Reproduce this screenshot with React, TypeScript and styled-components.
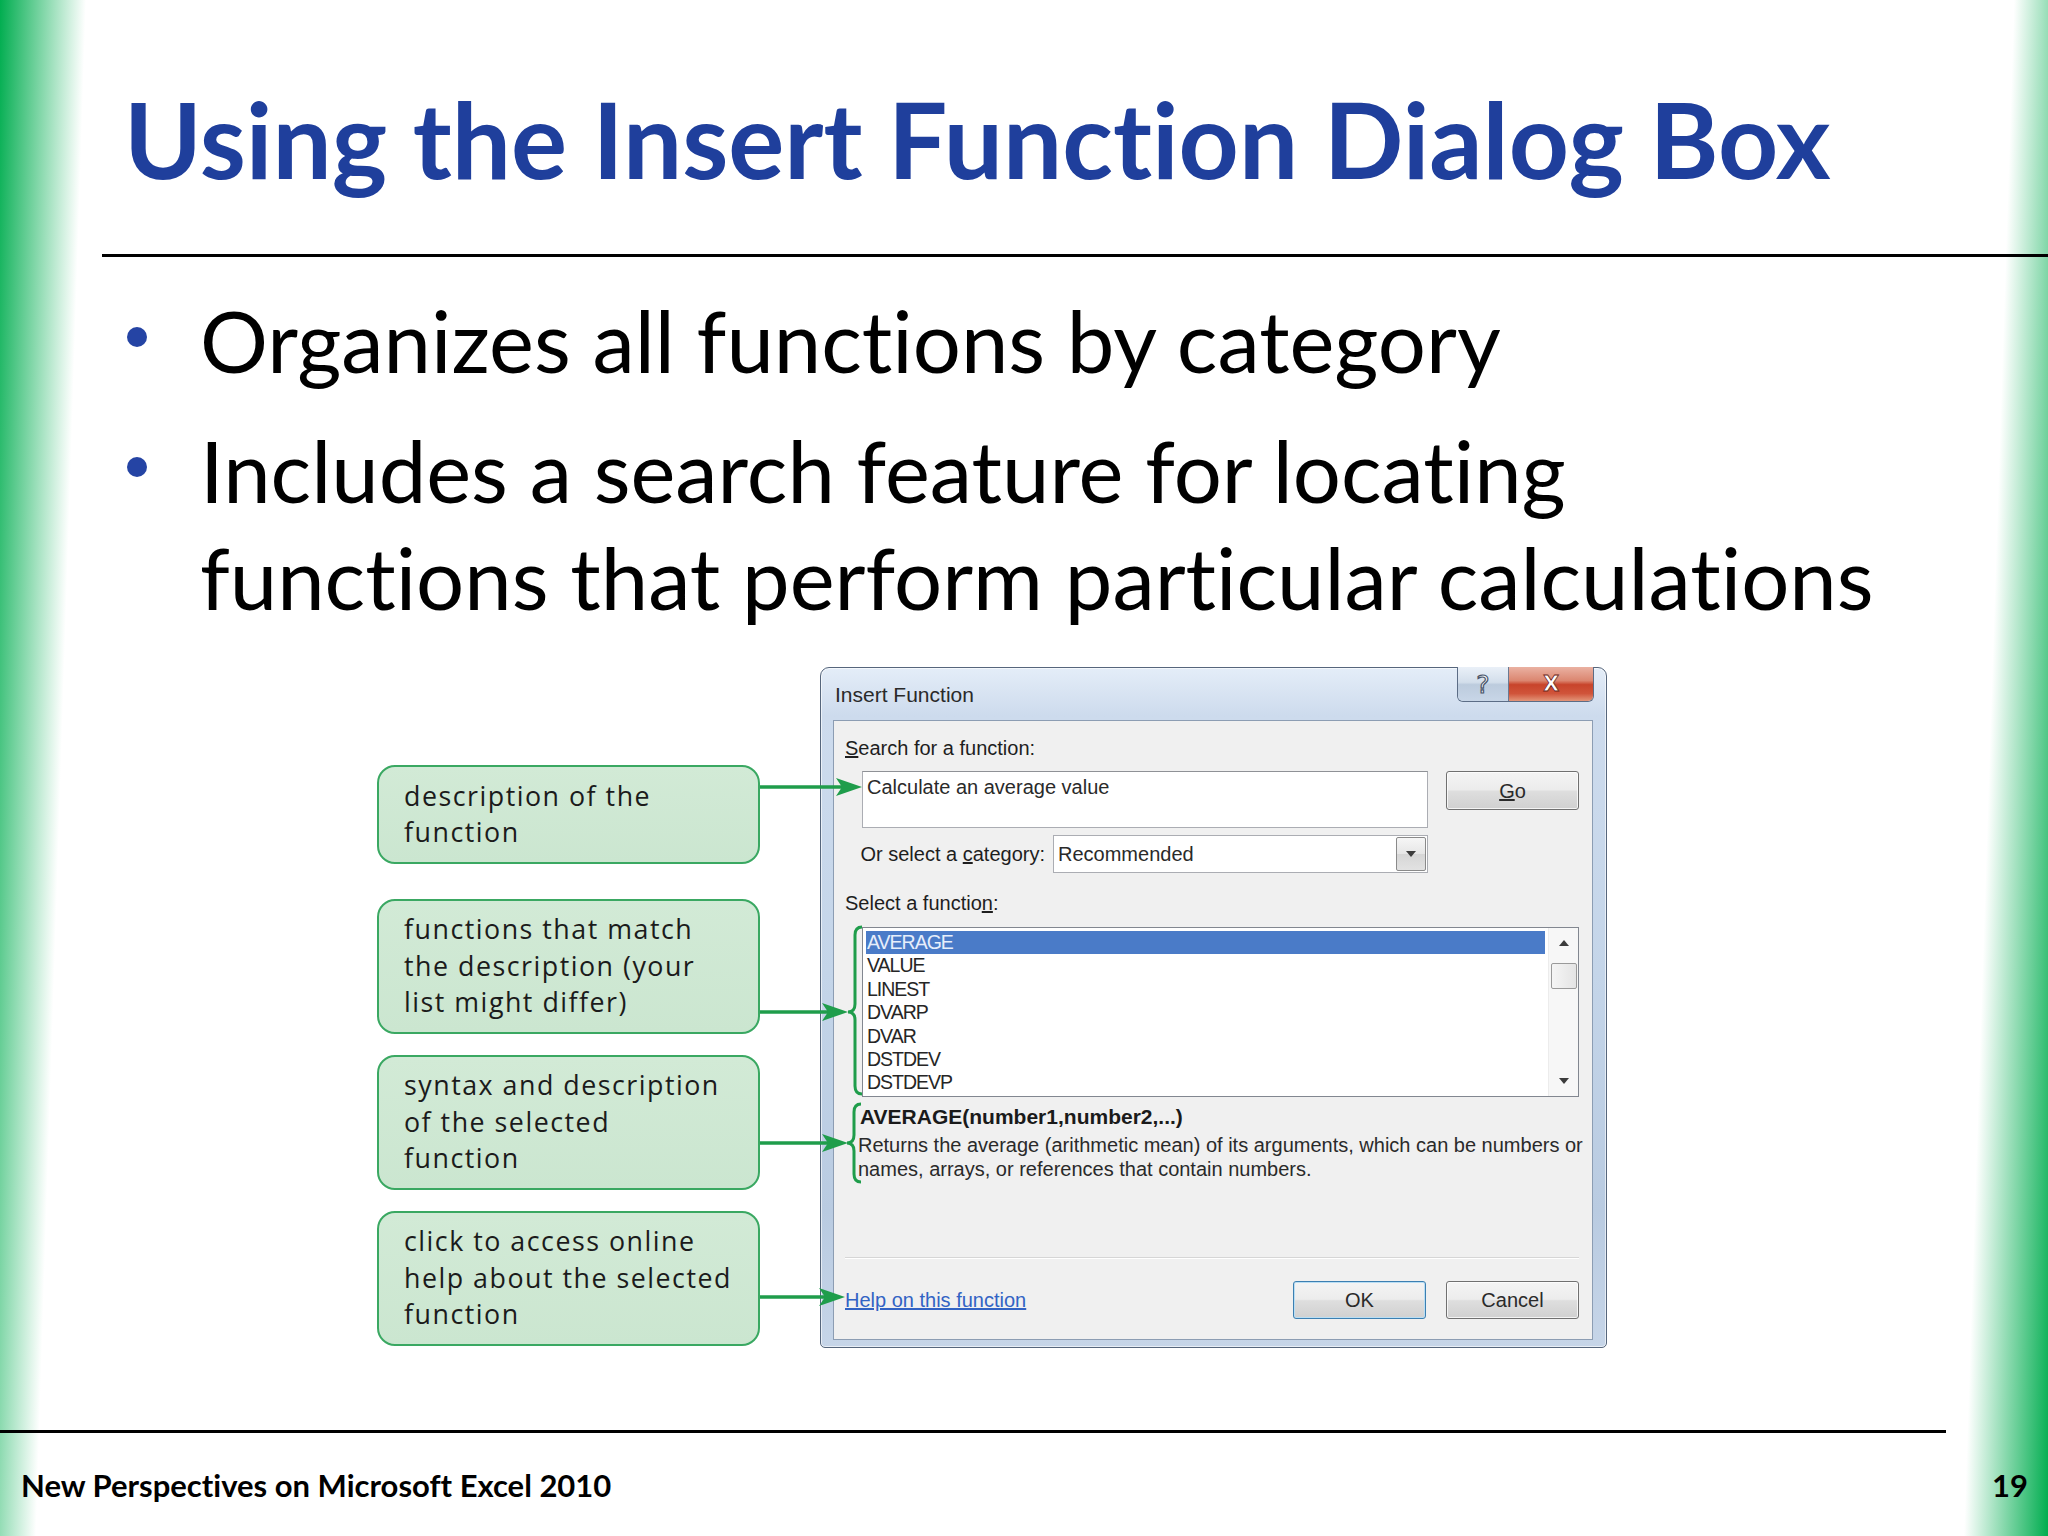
import React from 'react';
import styled, { createGlobalStyle, css } from 'styled-components';

const GlobalStyle = createGlobalStyle`
  html, body { margin: 0; padding: 0; background: #ffffff; }
  body { width: 2048px; height: 1536px; overflow: hidden; }
  *, *::before, *::after { box-sizing: border-box; }
`;

const noLigatures = css`
  font-variant-ligatures: none;
  font-feature-settings: 'liga' 0, 'clig' 0, 'dlig' 0;
`;

const GREEN = '#00ad4f';
const ARROW = '#1f9d4b';

const Slide = styled.div`
  width: 2048px;
  height: 1536px;
  position: relative;
  overflow: hidden;
  display: flex;
  flex-direction: column;
  background: linear-gradient(
    91.87deg,
    ${GREEN} 0px,
    #ffffff 86px,
    #ffffff 2013px,
    ${GREEN} 2097px
  );
  font-family: Lato, 'Open Sans', sans-serif;
`;

const Header = styled.header`
  height: 257px;
  margin-left: 102px;
  padding: 75px 0 0 22px;
  border-bottom: 3px solid #000000;
`;

const Title = styled.h1`
  margin: 0;
  font: 700 105px/1.2 Lato, sans-serif;
  ${noLigatures}
  color: #1f3f9c;
  white-space: nowrap;
`;

const BulletList = styled.ul`
  list-style: none;
  margin: 30px 0 0 0;
  padding: 0 0 0 127px;
  display: flex;
  flex-direction: column;
  gap: 23px;
`;

const Bullet = styled.li`
  display: flex;
  align-items: flex-start;
`;

const Dot = styled.span`
  flex: none;
  width: 20px;
  height: 20px;
  border-radius: 50%;
  background: #2544a4;
  margin: 40px 53px 0 0;
`;

const BulletText = styled.span`
  display: flex;
  flex-direction: column;
  font: 400 85px/107px Lato, sans-serif;
  ${noLigatures}
  color: #000000;
  white-space: nowrap;
`;

const Figure = styled.div`
  position: relative;
  display: flex;
  gap: 60px;
  margin: 36px 0 0 377px;
  height: 681px;
`;

const Callouts = styled.div`
  width: 383px;
  padding-top: 98px;
  display: flex;
  flex-direction: column;
`;

const Callout = styled.div<{ $gap: number }>`
  margin-top: ${(p) => p.$gap}px;
  border: 2px solid #3aa862;
  border-radius: 18px;
  background: linear-gradient(180deg, #d2ead6 0%, #cbe6d0 100%);
  padding: 10.5px 6px 11px 25px;
  font: 400 26.8px/36.5px 'Open Sans', sans-serif;
  ${noLigatures}
  letter-spacing: 1.5px;
  color: #1b1b1b;
  white-space: nowrap;
  display: flex;
  flex-direction: column;
`;

const Dialog = styled.div`
  width: 787px;
  height: 681px;
  display: flex;
  flex-direction: column;
  border: 1px solid #56667c;
  border-radius: 9px 9px 5px 5px;
  background: linear-gradient(
    180deg,
    #e4edf8 0%,
    #cddbed 7%,
    #c4d5e9 45%,
    #b9cbe1 80%,
    #c6d5e8 100%
  );
  box-shadow: inset 0 0 0 1px rgba(255, 255, 255, 0.6);
  font-family: 'Liberation Sans', Arial, sans-serif;
  color: #1e1e1e;
`;

const TitleBar = styled.div`
  height: 52px;
  flex: none;
  display: flex;
  align-items: flex-start;
  justify-content: space-between;
  padding: 0 12px 0 14px;
`;

const DialogTitle = styled.span`
  margin-top: 15px;
  font-size: 21px;
  line-height: 24px;
  color: #2a2a2a;
`;

const CaptionGroup = styled.div`
  display: flex;
  height: 35px;
  margin-top: -1px;
  border: 1px solid #5c6d86;
  border-top: none;
  border-radius: 0 0 6px 6px;
  overflow: hidden;
`;

const CaptionButton = styled.div<{ $close?: boolean }>`
  width: ${(p) => (p.$close ? 85 : 50)}px;
  display: flex;
  align-items: center;
  justify-content: center;
  font-family: 'DejaVu Sans', sans-serif;
  font-weight: ${(p) => (p.$close ? 700 : 400)};
  font-size: ${(p) => (p.$close ? 21 : 25)}px;
  color: ${(p) => (p.$close ? '#ffffff' : '#f2f5f9')};
  -webkit-text-stroke: ${(p) => (p.$close ? '0.8px #6b2418' : '1.2px #4a5568')};
  background: ${(p) =>
    p.$close
      ? 'linear-gradient(180deg, #eab1a2 0%, #db8670 40%, #c8442b 52%, #d0543a 78%, #e39579 100%)'
      : 'linear-gradient(180deg, #eaf0f8 0%, #d3deeb 45%, #bccbdd 52%, #c8d6e7 100%)'};
  & + & {
    border-left: 1px solid #6a7a92;
  }
`;

const Client = styled.div`
  flex: 1;
  margin: 0 13px 7px 12px;
  border: 1px solid #8c9db3;
  background: #f0f0f0;
  padding: 15px 13px 0 11px;
  display: flex;
  flex-direction: column;
  font-size: 20px;
  line-height: 24px;
`;

const Label = styled.div<{ $top?: number; $left?: number }>`
  margin-top: ${(p) => p.$top ?? 0}px;
  margin-left: ${(p) => p.$left ?? 0}px;
  white-space: nowrap;
`;

const SearchRow = styled.div`
  margin-top: 11px;
  padding-left: 17px;
  display: flex;
  align-items: flex-start;
  gap: 18px;
`;

const SearchBox = styled.div`
  width: 566px;
  height: 57px;
  border: 1px solid #abadb3;
  border-top-color: #8f9196;
  background: #ffffff;
  padding: 3px 4px;
  color: #2a2a2a;
`;

const PushButton = styled.div<{ $w: number; $h: number; $default?: boolean }>`
  width: ${(p) => p.$w}px;
  height: ${(p) => p.$h}px;
  border: 1px solid ${(p) => (p.$default ? '#3c7fb1' : '#707070')};
  border-radius: 3px;
  background: linear-gradient(
    180deg,
    #f4f4f4 0%,
    #ececec 48%,
    #dedede 52%,
    #d0d0d0 100%
  );
  box-shadow: inset 0 0 0 1px ${(p) => (p.$default ? '#b9def4' : 'rgba(255,255,255,0.75)')};
  display: flex;
  align-items: center;
  justify-content: center;
  color: #2a2a2a;
`;

const CategoryRow = styled.div`
  margin-top: 7px;
  height: 38px;
  padding-right: 151px;
  display: flex;
  align-items: center;
  justify-content: flex-end;
  gap: 8px;
`;

const Combo = styled.div`
  width: 375px;
  height: 38px;
  border: 1px solid #abadb3;
  background: #ffffff;
  display: flex;
  align-items: stretch;
`;

const ComboText = styled.span`
  flex: 1;
  padding: 6px 4px 0;
  color: #2a2a2a;
`;

const ComboButton = styled.span`
  width: 30px;
  margin: 1px;
  border: 1px solid #8a8a8a;
  border-radius: 2px;
  background: linear-gradient(180deg, #f6f6f6 0%, #e6e6e6 50%, #d6d6d6 51%, #e2e2e2 100%);
  display: flex;
  align-items: center;
  justify-content: center;
`;

const ListBox = styled.div`
  margin: 12px 0 0 17px;
  width: 717px;
  height: 170px;
  border: 1px solid #828790;
  background: #ffffff;
  display: flex;
`;

const Rows = styled.div`
  flex: 1;
  padding: 3px 3px 0;
  display: flex;
  flex-direction: column;
`;

const Row = styled.div<{ $selected?: boolean }>`
  height: 23.4px;
  line-height: 23.4px;
  font-size: 19.5px;
  letter-spacing: -1px;
  padding-left: 1px;
  color: ${(p) => (p.$selected ? '#e6eefb' : '#262626')};
  background: ${(p) => (p.$selected ? '#4a7bc8' : 'transparent')};
`;

const ScrollBar = styled.div`
  width: 30px;
  background: #f7f7f7;
  border-left: 1px solid #ececec;
  display: flex;
  flex-direction: column;
  align-items: center;
`;

const ScrollArrow = styled.div`
  height: 30px;
  width: 100%;
  display: flex;
  align-items: center;
  justify-content: center;
`;

const Thumb = styled.div`
  margin-top: 5px;
  width: 26px;
  height: 26px;
  border: 1px solid #9a9a9a;
  border-radius: 2px;
  background: linear-gradient(90deg, #f5f5f5 0%, #e4e4e4 100%);
`;

const Spacer = styled.div`
  flex: 1;
`;

const Syntax = styled.div`
  margin: 8px 0 0 15px;
  font-weight: 700;
  font-size: 21px;
  color: #1a1a1a;
  white-space: nowrap;
`;

const Description = styled.div`
  margin: 4px 0 0 13px;
  display: flex;
  flex-direction: column;
  white-space: nowrap;
  color: #2a2a2a;
`;

const Separator = styled.div`
  margin-top: 76px;
  height: 2px;
  border-top: 1px solid #d6d6d6;
  border-bottom: 1px solid #ffffff;
`;

const BottomRow = styled.div`
  margin-top: 22px;
  display: flex;
  align-items: center;
  gap: 20px;
`;

const HelpLink = styled.span`
  margin-right: auto;
  color: #3263c4;
  text-decoration: underline;
  white-space: nowrap;
`;

const Overlay = styled.svg`
  position: absolute;
  left: 0;
  top: 0;
  width: 100%;
  height: 100%;
  pointer-events: none;
  overflow: visible;
`;

const Footer = styled.footer`
  margin-top: auto;
  height: 106px;
  flex: none;
  display: flex;
  flex-direction: column;
`;

const FooterRule = styled.div`
  width: 1946px;
  height: 3px;
  background: #000000;
`;

const FooterRow = styled.div`
  flex: 1;
  display: flex;
  align-items: center;
  justify-content: space-between;
  padding: 0 20px 0 21px;
  font: 700 31px/36px Lato, sans-serif;
  ${noLigatures}
  color: #000000;
`;

const Triangle: React.FC<{ up?: boolean }> = ({ up }) => (
  <svg width="10" height="6" viewBox="0 0 10 6">
    <polygon points={up ? '5,0 10,6 0,6' : '0,0 10,0 5,6'} fill="#3c3c3c" />
  </svg>
);

const arrows = [
  { y: 120, x2: 485 },
  { y: 345, x2: 471 },
  { y: 476, x2: 471 },
  { y: 630, x2: 468 },
];

const brace = (xr: number, top: number, bottom: number, tip: number) => {
  const xm = xr - 7;
  const xl = xr - 14;
  const r = 8;
  return `M ${xr} ${top} Q ${xm} ${top} ${xm} ${top + r} L ${xm} ${tip - r} Q ${xm} ${tip} ${xl} ${tip} Q ${xm} ${tip} ${xm} ${tip + r} L ${xm} ${bottom - r} Q ${xm} ${bottom} ${xr} ${bottom}`;
};

const functions = ['AVERAGE', 'VALUE', 'LINEST', 'DVARP', 'DVAR', 'DSTDEV', 'DSTDEVP'];

const callouts = [
  { gap: 0, lines: ['description of the', 'function'] },
  { gap: 35, lines: ['functions that match', 'the description (your', 'list might differ)'] },
  { gap: 21, lines: ['syntax and description', 'of the selected', 'function'] },
  { gap: 21, lines: ['click to access online', 'help about the selected', 'function'] },
];

export default function App() {
  return (
    <>
      <GlobalStyle />
      <Slide>
        <Header>
          <Title>Using the Insert Function Dialog Box</Title>
        </Header>

        <BulletList>
          <Bullet>
            <Dot />
            <BulletText>
              <span>Organizes all functions by category</span>
            </BulletText>
          </Bullet>
          <Bullet>
            <Dot />
            <BulletText>
              <span>Includes a search feature for locating</span>
              <span>functions that perform particular calculations</span>
            </BulletText>
          </Bullet>
        </BulletList>

        <Figure>
          <Callouts>
            {callouts.map((c, i) => (
              <Callout key={i} $gap={c.gap}>
                {c.lines.map((l) => (
                  <span key={l}>{l}</span>
                ))}
              </Callout>
            ))}
          </Callouts>

          <Dialog>
            <TitleBar>
              <DialogTitle>Insert Function</DialogTitle>
              <CaptionGroup>
                <CaptionButton>?</CaptionButton>
                <CaptionButton $close>X</CaptionButton>
              </CaptionGroup>
            </TitleBar>
            <Client>
              <Label>
                <u>S</u>earch for a function:
              </Label>
              <SearchRow>
                <SearchBox>Calculate an average value</SearchBox>
                <PushButton $w={133} $h={39}>
                  <span>
                    <u>G</u>o
                  </span>
                </PushButton>
              </SearchRow>
              <CategoryRow>
                <span>
                  Or select a <u>c</u>ategory:
                </span>
                <Combo>
                  <ComboText>Recommended</ComboText>
                  <ComboButton>
                    <Triangle />
                  </ComboButton>
                </Combo>
              </CategoryRow>
              <Label $top={18}>
                Select a functio<u>n</u>:
              </Label>
              <ListBox>
                <Rows>
                  {functions.map((f, i) => (
                    <Row key={f} $selected={i === 0}>
                      {f}
                    </Row>
                  ))}
                </Rows>
                <ScrollBar>
                  <ScrollArrow>
                    <Triangle up />
                  </ScrollArrow>
                  <Thumb />
                  <Spacer />
                  <ScrollArrow>
                    <Triangle />
                  </ScrollArrow>
                </ScrollBar>
              </ListBox>
              <Syntax>AVERAGE(number1,number2,...)</Syntax>
              <Description>
                <span>Returns the average (arithmetic mean) of its arguments, which can be numbers or</span>
                <span>names, arrays, or references that contain numbers.</span>
              </Description>
              <Separator />
              <BottomRow>
                <HelpLink>Help on this function</HelpLink>
                <PushButton $w={133} $h={38} $default>
                  OK
                </PushButton>
                <PushButton $w={133} $h={38}>
                  Cancel
                </PushButton>
              </BottomRow>
            </Client>
          </Dialog>

          <Overlay>
            {arrows.map((a) => (
              <g key={a.y}>
                <line x1={383} y1={a.y} x2={a.x2 - 16} y2={a.y} stroke={ARROW} strokeWidth={3.5} />
                <polygon
                  points={`${a.x2},${a.y} ${a.x2 - 26},${a.y - 9} ${a.x2 - 20},${a.y} ${a.x2 - 26},${a.y + 9}`}
                  fill={ARROW}
                />
              </g>
            ))}
            <path d={brace(485, 260, 427, 345)} fill="none" stroke={ARROW} strokeWidth={3} />
            <path d={brace(484, 437, 515, 476)} fill="none" stroke={ARROW} strokeWidth={3} />
          </Overlay>
        </Figure>

        <Footer>
          <FooterRule />
          <FooterRow>
            <span>New Perspectives on Microsoft Excel 2010</span>
            <span>19</span>
          </FooterRow>
        </Footer>
      </Slide>
    </>
  );
}
